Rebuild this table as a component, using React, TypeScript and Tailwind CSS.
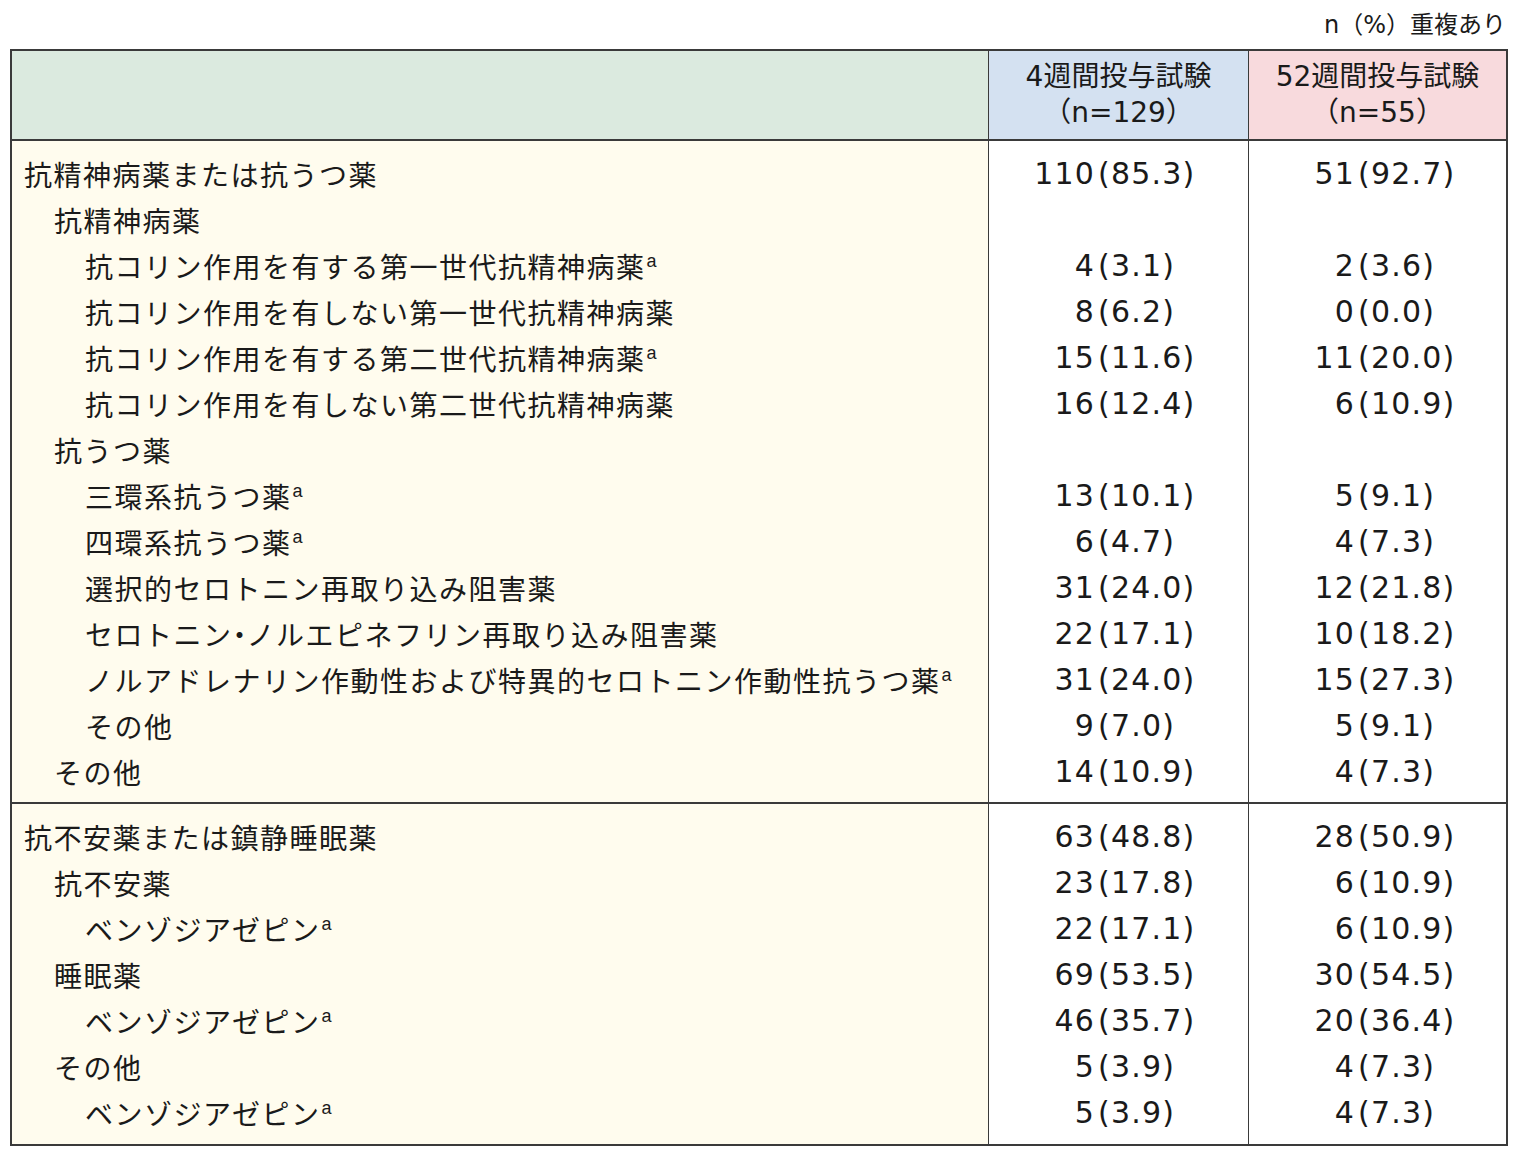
import React from 'react';

type Row = {
  label: string;
  level: 0 | 1 | 2;
  sup?: boolean;
  a?: [string, string];
  b?: [string, string];
};

const group1: Row[] = [
  { label: '抗精神病薬または抗うつ薬', level: 0, a: ['110', '85.3'], b: ['51', '92.7'] },
  { label: '抗精神病薬', level: 1 },
  { label: '抗コリン作用を有する第一世代抗精神病薬', level: 2, sup: true, a: ['4', '3.1'], b: ['2', '3.6'] },
  { label: '抗コリン作用を有しない第一世代抗精神病薬', level: 2, a: ['8', '6.2'], b: ['0', '0.0'] },
  { label: '抗コリン作用を有する第二世代抗精神病薬', level: 2, sup: true, a: ['15', '11.6'], b: ['11', '20.0'] },
  { label: '抗コリン作用を有しない第二世代抗精神病薬', level: 2, a: ['16', '12.4'], b: ['6', '10.9'] },
  { label: '抗うつ薬', level: 1 },
  { label: '三環系抗うつ薬', level: 2, sup: true, a: ['13', '10.1'], b: ['5', '9.1'] },
  { label: '四環系抗うつ薬', level: 2, sup: true, a: ['6', '4.7'], b: ['4', '7.3'] },
  { label: '選択的セロトニン再取り込み阻害薬', level: 2, a: ['31', '24.0'], b: ['12', '21.8'] },
  { label: 'セロトニン・ノルエピネフリン再取り込み阻害薬', level: 2, a: ['22', '17.1'], b: ['10', '18.2'] },
  { label: 'ノルアドレナリン作動性および特異的セロトニン作動性抗うつ薬', level: 2, sup: true, a: ['31', '24.0'], b: ['15', '27.3'] },
  { label: 'その他', level: 2, a: ['9', '7.0'], b: ['5', '9.1'] },
  { label: 'その他', level: 1, a: ['14', '10.9'], b: ['4', '7.3'] },
];

const group2: Row[] = [
  { label: '抗不安薬または鎮静睡眠薬', level: 0, a: ['63', '48.8'], b: ['28', '50.9'] },
  { label: '抗不安薬', level: 1, a: ['23', '17.8'], b: ['6', '10.9'] },
  { label: 'ベンゾジアゼピン', level: 2, sup: true, a: ['22', '17.1'], b: ['6', '10.9'] },
  { label: '睡眠薬', level: 1, a: ['69', '53.5'], b: ['30', '54.5'] },
  { label: 'ベンゾジアゼピン', level: 2, sup: true, a: ['46', '35.7'], b: ['20', '36.4'] },
  { label: 'その他', level: 1, a: ['5', '3.9'], b: ['4', '7.3'] },
  { label: 'ベンゾジアゼピン', level: 2, sup: true, a: ['5', '3.9'], b: ['4', '7.3'] },
];

const indent = ['pl-[12px]', 'pl-[42px]', 'pl-[73px]'];

// the middle dot is set narrow (proportional) in the source table
const renderLabel = (s: string) =>
  s.split('・').map((part, i) =>
    i === 0 ? (
      part
    ) : (
      <React.Fragment key={i}>
        <span className="[font-feature-settings:'palt'] tracking-normal">・</span>
        {part}
      </React.Fragment>
    ),
  );

const Label = ({ row }: { row: Row }) => (
  <div className={`h-[46px] leading-[46px] whitespace-nowrap ${indent[row.level]}`}>
    {renderLabel(row.label)}
    {row.sup && (
      <span className="relative -top-[11px] ml-[1px] font-['Liberation_Sans',sans-serif] text-[18px] tracking-normal">a</span>
    )}
  </div>
);

const Num = ({ v }: { v?: [string, string] }) => (
  <div className="flex h-[46px] leading-[46px] whitespace-nowrap">
    {v && (
      <>
        <span className="w-[106px] text-right">{v[0]}</span>
        <span className="ml-[3px]">({v[1]})</span>
      </>
    )}
  </div>
);

const Group = ({ rows, last }: { rows: Row[]; last?: boolean }) => {
  const pad = last ? 'pt-[10px] pb-[8px]' : 'pt-[10px] pb-[7px] border-b-2 border-[#3a3a3a]';
  return (
    <>
      <div className={`bg-[#fffcee] text-[28px] tracking-[1.5px] ${pad}`}>
        {rows.map((r, i) => (
          <Label key={i} row={r} />
        ))}
      </div>
      <div className={`bg-white border-l border-[#3a3a3a] font-['DejaVu_Sans',sans-serif] text-[30px] tracking-[1.2px] ${pad}`}>
        {rows.map((r, i) => (
          <Num key={i} v={r.a} />
        ))}
      </div>
      <div className={`bg-white border-l border-[#3a3a3a] font-['DejaVu_Sans',sans-serif] text-[30px] tracking-[1.2px] ${pad}`}>
        {rows.map((r, i) => (
          <Num key={i} v={r.b} />
        ))}
      </div>
    </>
  );
};

export default function App() {
  return (
    <div className="bg-white w-[1518px] min-h-[1156px] text-[#1a1a1a] font-['Noto_Sans_CJK_JP',sans-serif]">
      <div className="h-[49px] flex items-center justify-end pr-[12px] text-[24px] font-['DejaVu_Sans','Noto_Sans_CJK_JP',sans-serif]">
        n（%）重複あり
      </div>
      <div className="mx-[10px] border-2 border-[#3a3a3a] grid grid-cols-[976px_260px_258px]">
        <div className="h-[90px] bg-[#dbeadf] border-b-2 border-[#3a3a3a]" />
        <div className="h-[90px] bg-[#d4e1f1] border-l border-b-2 border-[#3a3a3a] flex flex-col items-center justify-center text-[28px] leading-[36px] font-['DejaVu_Sans','Noto_Sans_CJK_JP',sans-serif]">
          <div>4週間投与試験</div>
          <div>（n=129）</div>
        </div>
        <div className="h-[90px] bg-[#f8dadd] border-l border-b-2 border-[#3a3a3a] flex flex-col items-center justify-center text-[28px] leading-[36px] font-['DejaVu_Sans','Noto_Sans_CJK_JP',sans-serif]">
          <div>52週間投与試験</div>
          <div>（n=55）</div>
        </div>
        <Group rows={group1} />
        <Group rows={group2} last />
      </div>
    </div>
  );
}
